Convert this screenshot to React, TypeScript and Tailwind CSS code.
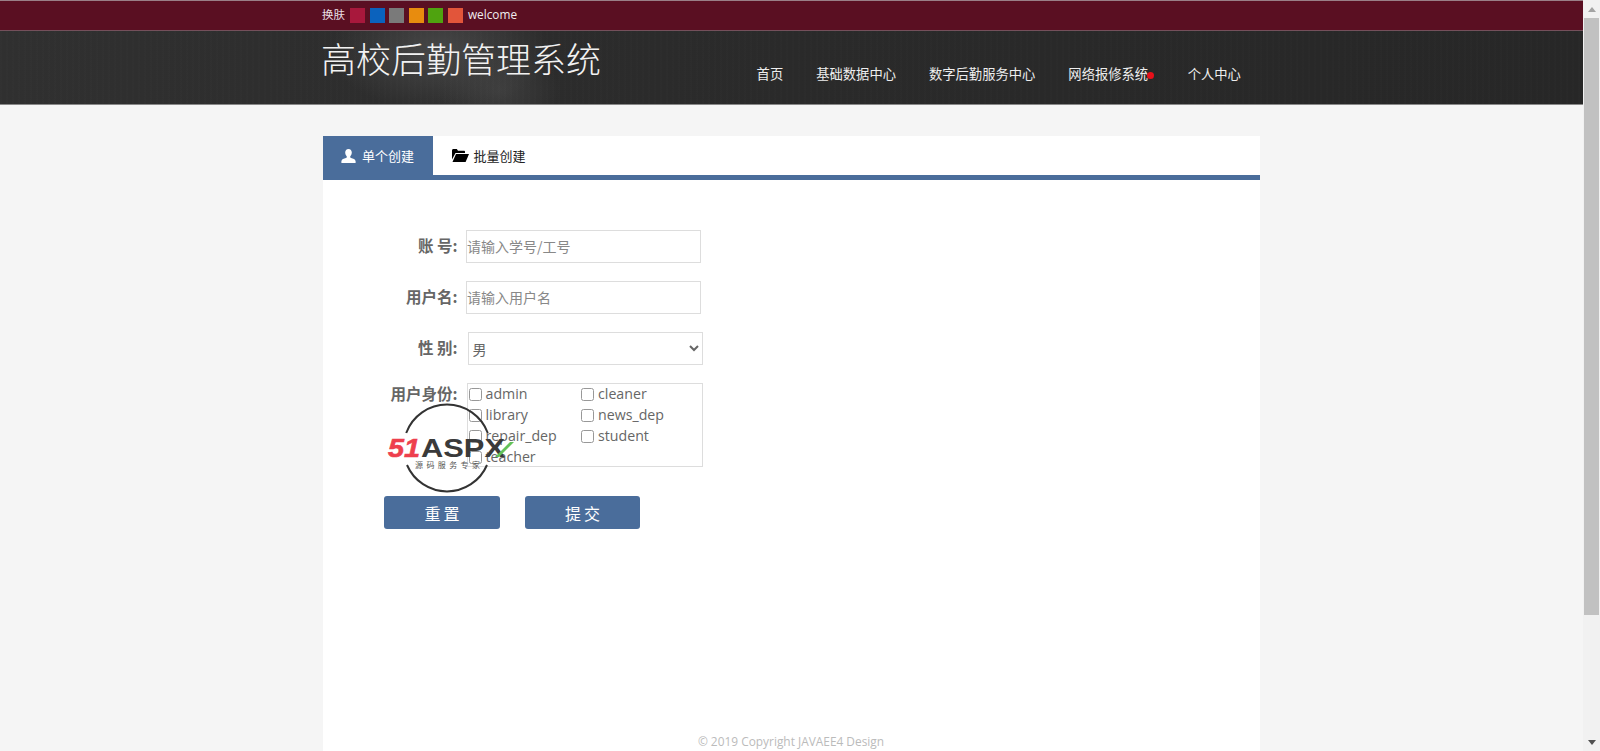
import * as React from "react";

const swatches = [
  "bg-[#a8183c]",
  "bg-[#0b62bd]",
  "bg-[#7a7a7a]",
  "bg-[#e88c0e]",
  "bg-[#4fa30f]",
  "bg-[#e2553a]",
];

const roles = ["admin", "cleaner", "library", "news_dep", "repair_dep", "student", "teacher"];

const cjk = "font-['Noto_Sans_CJK_SC','Liberation_Sans',sans-serif]";

function UserIcon() {
  return (
    <svg width="15" height="14" viewBox="0 0 15 14" className="fill-white">
      <path d="M7.5 0C5.4 0 4.2 1.5 4.2 3.6c0 1.5.7 3 1.6 3.8v1.2C3.9 9.6 1 9.9.4 12v2h14.2v-2c-.6-2.1-3.5-2.4-5.4-3.4V7.4c.9-.8 1.6-2.3 1.6-3.8C10.8 1.500 9.600 0 7.500 0z" />
    </svg>
  );
}

function FolderIcon() {
  return (
    <svg width="17" height="13" viewBox="0 0 17 13" className="fill-black">
      <path d="M0 1.500C0 .7.600 0 1.400 0h3.400l1.200 1.700h6c.6 0 1 .4 1 1V4H3.500L0 10.500z" />
      <path d="M4 5h13l-3.400 8H.5z" />
    </svg>
  );
}

// watermark that sits over the role list
function Watermark() {
  return (
    <svg width="130" height="100" viewBox="0 0 130 100" className="absolute left-[385px] top-[395px] pointer-events-none">
      <path d="M21.200 38A43.500 43.500 0 0 1 102.800 38" fill="none" stroke="#333" strokeWidth="2" />
      <path d="M22 70A43.500 43.500 0 0 0 102 70" fill="none" stroke="#333" strokeWidth="2" />
      <text x="3" y="62" fontFamily="Liberation Sans" fontWeight="700" fontStyle="italic" fontSize="26" fill="#ee3f4d" stroke="#ee3f4d" strokeWidth="0.600" textLength="32" lengthAdjust="spacingAndGlyphs">
        51
      </text>
      <text x="36" y="62" fontFamily="Liberation Sans" fontWeight="700" fontSize="25" fill="#3a3a3a" textLength="84" lengthAdjust="spacingAndGlyphs">
        ASPX
      </text>
      <path d="M110 62l15-15h4l-15 15z" fill="#62c25a" />
      <text x="30" y="73" fontFamily="Noto Sans CJK SC" fontSize="8" fill="#555" textLength="65">
        源码服务专家
      </text>
    </svg>
  );
}

export default function App() {
  return (
    <div className={`relative flex h-[751px] w-full overflow-hidden bg-[#f5f5f5] ${cjk}`}>
      <div className="flex w-[1583px] flex-col">
        {/* top strip */}
        <div className="flex h-[31px] items-center border-y border-t-[#9a7f87] border-b-[#74505b] bg-[#5a0f22] pb-[1px] pl-[322px]">
          <span className="mr-[5px] w-[23px] text-[11.500px] text-[#e8dfe2]">换肤</span>
          <div className="flex gap-[4.600px]">
            {swatches.map((c) => (
              <span key={c} className={`h-[15px] w-[15px] ${c}`} />
            ))}
          </div>
          <span className="ml-[5px] font-['Open_Sans',sans-serif] text-[11.800px] text-[#f0ecee]">welcome</span>
        </div>

        {/* header */}
        <header className="flex h-[74px] border-b border-[#888] bg-[repeating-linear-gradient(90deg,rgba(255,255,255,0.007)_0_2px,transparent_2px_6px),radial-gradient(ellipse_110px_60px_at_440px_20px,#474747_0%,transparent_100%),radial-gradient(ellipse_60px_45px_at_500px_60px,#3d3d3d_0%,transparent_100%),linear-gradient(90deg,#303030,#2a2a2a_50%,#272727)] pl-[321px]">
          <h1 className="mt-[4px] h-fit text-[35px] leading-[46px] font-light text-[#f2f2f2]">高校后勤管理系统</h1>
          <nav className="ml-[155.600px] mt-[33px] flex h-fit items-center text-[13.300px] leading-[20px] text-[#eee]">
            <a className="mr-[33px]">首页</a>
            <a className="mr-[33px]">基础数据中心</a>
            <a className="mr-[33px]">数字后勤服务中心</a>
            <a className="relative mr-[39.500px]">
              网络报修系统
              <span className="absolute left-[79px] top-[8px] h-[7px] w-[7px] rounded-full bg-[#e8101a]" />
            </a>
            <a>个人中心</a>
          </nav>
        </header>

        <main className="flex min-h-0 flex-1 flex-col pl-[322.500px] pt-[31px]">
          <div className="flex w-[937px] flex-1 flex-col bg-white">
            <div className="flex h-[44px] border-b-[5px] border-[#4a6d9b] text-[13px]">
              <div className="flex w-[110.500px] items-center bg-[#4a6d9b] pl-[18.500px] text-white">
                <UserIcon />
                <span className="ml-[6px]">单个创建</span>
              </div>
              <div className="flex items-center pl-[18.500px] text-[#222]">
                <FolderIcon />
                <span className="ml-[5px]">批量创建</span>
              </div>
            </div>

            <form className="flex flex-col gap-[18px] pt-[50px] text-[14px] text-[#666]">
              <div className="flex">
                <label className="w-[135px] pt-[4px] text-right text-[15.500px] font-bold">账 号:</label>
                <input
                  placeholder="请输入学号/工号"
                  className="ml-[8.500px] h-[33px] w-[235px] border border-[#ddd] pb-[2px] placeholder:text-[#888]"
                />
              </div>
              <div className="flex">
                <label className="w-[135px] pt-[4px] text-right text-[15.500px] font-bold">用户名:</label>
                <input
                  placeholder="请输入用户名"
                  className="ml-[8.500px] h-[33px] w-[235px] border border-[#ddd] pb-[2px] placeholder:text-[#888]"
                />
              </div>
              <div className="flex">
                <label className="w-[135px] pt-[4px] text-right text-[15.500px] font-bold">性 别:</label>
                <select className="ml-[10px] h-[33px] w-[235px] border border-[#ddd] bg-white">
                  <option>男</option>
                </select>
              </div>
              <div className="flex">
                <label className="w-[135px] text-right text-[15.500px] leading-[20px] font-bold">用户身份:</label>
                <div className="ml-[9px] grid h-[84px] w-[236px] grid-cols-[112.500px_112.500px] content-start border border-[#ddd] pl-[1px] font-['Open_Sans',sans-serif] text-[14.200px] leading-[20.900px]">
                  {roles.map((r) => (
                    <label key={r} className="flex items-center">
                      <input type="checkbox" className="mr-[4px] h-[13px] w-[13px] opacity-75" />
                      {r}
                    </label>
                  ))}
                </div>
              </div>
              <div className="mt-[11px] flex gap-[25px] pl-[61.500px]">
                <button type="button" className="h-[33px] w-[116px] rounded-[3px] bg-[#4a6d9b] pl-[3px] text-[16px] tracking-[3px] text-white">
                  重置
                </button>
                <button type="button" className="h-[33px] w-[115px] rounded-[3px] bg-[#4a6d9b] pl-[3px] text-[16px] tracking-[3px] text-white">
                  提交
                </button>
              </div>
            </form>

            <footer className="mt-auto pb-[1px] text-center font-['Open_Sans',sans-serif] text-[11.900px] leading-[18px] text-[#bbb]">
              © 2019 Copyright JAVAEE4 Design
            </footer>
          </div>
        </main>
      </div>

      {/* scrollbar */}
      <div className="flex w-[17px] flex-col items-center bg-[#f1f1f1]">
        <div className="flex h-[18px] items-center justify-center">
          <span className="h-0 w-0 border-x-[4px] border-b-[5px] border-x-transparent border-b-[#a3a3a3]" />
        </div>
        <div className="h-[597px] w-[15px] bg-[#c1c1c1]" />
        <div className="mt-auto flex h-[18px] items-center justify-center">
          <span className="h-0 w-0 border-x-[4px] border-t-[5px] border-x-transparent border-t-[#505050]" />
        </div>
      </div>

      <Watermark />
    </div>
  );
}
